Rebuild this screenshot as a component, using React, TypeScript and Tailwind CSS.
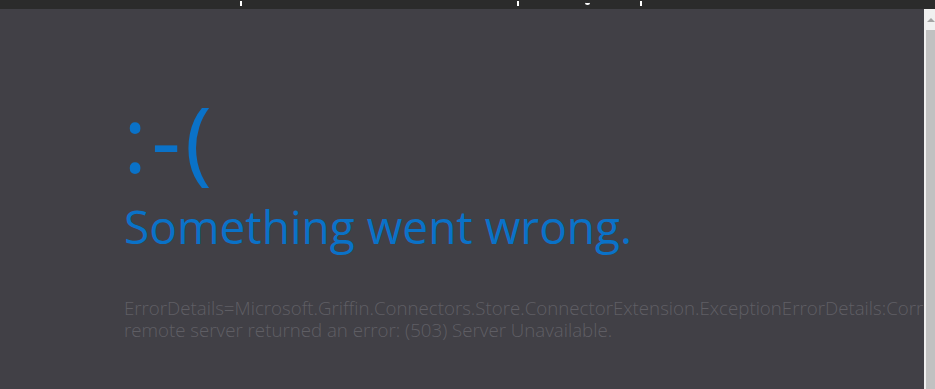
import React from "react";

const App: React.FC = () => {
  return (
    <div className="flex flex-col h-[389px] w-[935px] overflow-hidden bg-[#414046]" style={{ fontFamily: '"Open Sans", "Noto Sans", sans-serif' }}>
      {/* top strip with clipped title */}
      <div className="relative h-[9px] bg-[#2b2b2b] shrink-0">
        <span className="absolute left-[240px] top-[1px] w-[2px] h-[5px] bg-white" />
        <span className="absolute left-[517px] top-[1px] w-[2px] h-[5px] bg-white" />
        <span className="absolute left-[585px] top-[0px] w-[5px] h-[5px] rounded-b-full border-b-2 border-white" />
        <span className="absolute left-[640px] top-[1px] w-[2px] h-[5px] bg-white" />
      </div>

      <div className="flex flex-1 min-h-0">
        <main className="flex-1 min-w-0 overflow-hidden pl-[124px] pt-[73px]">
          <div className="text-[#0a72c8] text-[92px] font-normal leading-[112px] tracking-[4px] -ml-[1px]">:-(</div>
          <h1 className="text-[#0a72c8] text-[46px] font-normal leading-[56px] mt-[4px] whitespace-nowrap">
            Something went wrong.
          </h1>
          <div className="mt-[43px] text-[#5f5e64] text-[18.7px] font-light leading-[22px]">
            <p className="whitespace-nowrap">
              ErrorDetails=Microsoft.Griffin.Connectors.Store.ConnectorExtension.ExceptionErrorDetails:CorrelationId, The
            </p>
            <p className="whitespace-nowrap">remote server returned an error: (503) Server Unavailable.</p>
          </div>
        </main>

        {/* scrollbar */}
        <div className="w-[11px] shrink-0 flex flex-col bg-[#c1c1c1] border-l-2 border-[#f0f0f0]">
          <div className="h-[21px] bg-[#f0f0f0] flex items-center justify-center">
            <div className="w-0 h-0 border-l-[4px] border-r-[4px] border-b-[4px] border-l-transparent border-r-transparent border-b-[#a3a3a3]" />
          </div>
          <div className="flex-1" />
        </div>
      </div>
    </div>
  );
};

export default App;
